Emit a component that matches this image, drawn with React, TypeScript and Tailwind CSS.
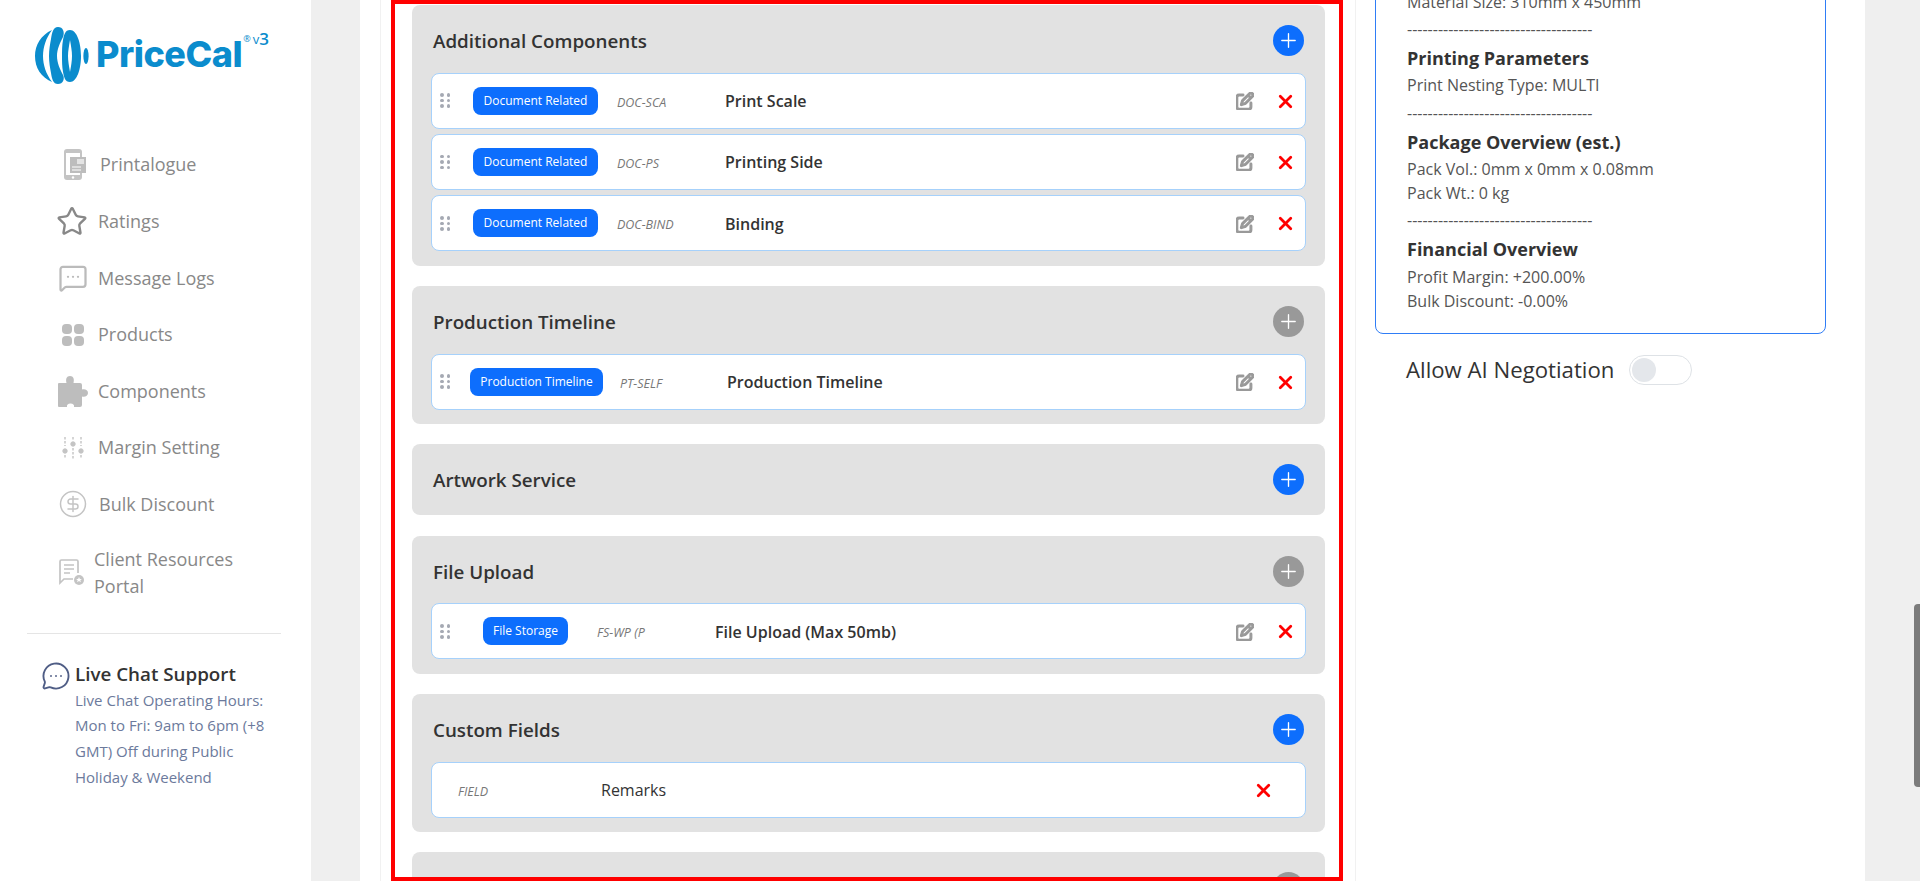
import { CircleDollarSign, MessageCircleMore, MessageSquareMore, Plus, Star, X } from 'lucide-react';
import { FaRegPenToSquare } from 'react-icons/fa6';

const font = "font-['Open_Sans',sans-serif]";

function PrintalogueIcon() {
  return (
    <svg width="24" height="33" viewBox="0 0 24 33" fill="none">
      <rect x="1" y="1" width="18" height="31" rx="3" fill="#c4c4c4" />
      <rect x="3" y="5" width="14" height="22" fill="#fff" />
      <rect x="7" y="9" width="16" height="16" fill="#bdbdbd" />
      <rect x="14" y="11" width="7" height="5" fill="#e4e4e4" />
      <path d="M9 19h9M9 22h9" stroke="#fff" strokeWidth="1.2" />
      <circle cx="10" cy="29.5" r="1.2" fill="#fff" />
    </svg>
  );
}

function ProductsIcon() {
  return (
    <svg width="24" height="24" viewBox="0 0 24 24" fill="#bdbdbd">
      <rect x="1" y="1" width="10" height="10" rx="4" />
      <rect x="13" y="1" width="10" height="10" rx="4" />
      <rect x="1" y="13" width="10" height="10" rx="4" />
      <rect x="13" y="13" width="10" height="10" rx="4" />
    </svg>
  );
}

function PuzzleIcon() {
  return (
    <svg width="30" height="31" viewBox="0 0 30 31" fill="#bdbdbd">
      <path d="M1 7h7.500C7.500 3 8.500 0 12 0s4.500 3 3.500 7H22a2 2 0 0 1 2 2v4.500c3-.7 6 .5 6 3.500s-3 4.200-6 3.500V29a2 2 0 0 1-2 2h-6c.5-2-1-3.500-3.500-3.500S8.500 29 9 31H1a1 1 0 0 1-1-1V8a1 1 0 0 1 1-1z" />
    </svg>
  );
}

function MarginIcon() {
  return (
    <svg width="22" height="24" viewBox="0 0 22 24" fill="#c4c4c4" stroke="#c4c4c4">
      <path d="M3 1v9M3 19v4M11 1v4M11 12v11M19 1v9M19 19v4" strokeWidth="1.4" strokeDasharray="2.5 1.5" />
      <circle cx="3" cy="15" r="2.2" />
      <circle cx="11" cy="8" r="2.2" />
      <circle cx="19" cy="15" r="2.2" />
    </svg>
  );
}

function ClientIcon() {
  return (
    <svg width="27" height="27" viewBox="0 0 27 27" fill="none" stroke="#c4c4c4" strokeWidth="1.7">
      <path d="M15 20H6l-4 4V2.500A1.500 1.500 0 0 1 3.500 1h15A1.500 1.500 0 0 1 20 2.500V14" />
      <path d="M6 6h10M6 10h10M6 14h6" />
      <circle cx="21" cy="21" r="5" fill="#c4c4c4" stroke="none" />
      <path d="m21 18 .9 2h2l-1.600 1.300.6 2-1.900-1.200-1.900 1.200.6-2L18.100 20h2z" fill="#fff" stroke="none" />
    </svg>
  );
}

function LogoMark() {
  return (
    <svg width="54" height="58" viewBox="0 0 54 58" fill="#0b8ccd">
      <path d="M17 3C6 8 0 18 0 29c0 12 6 21 17 26-6-8-9-17-9-26 0-9 3-18 9-26z" />
      <path d="M23 0c-5 0-6 6-7 12-1 5-2 11-2 17s1 12 2 17c1 6 2 11 7 11 5 0 7-5 5-9-3-6-6-12-6-19s3-13 6-19c2-5 0-10-5-10z" />
      <path d="M35 3c-5 0-6 5-7 10-1 5-1 11-1 16s0 11 1 16c1 5 2 10 7 10 7 0 11-13 11-26S42 3 35 3zm0 10c1 6 2 11 2 16s-1 10-2 16c-1-6-2-11-2-16s1-10 2-16z" />
      <ellipse cx="51" cy="29" rx="2.600" ry="8" />
    </svg>
  );
}

const navItems = [
  { label: 'Printalogue', icon: <PrintalogueIcon />, rowClass: 'h-[58.500px]', iconClass: 'w-[29px] pl-[5px]', textClass: 'ml-[13px]' },
  { label: 'Ratings', icon: <Star size={33} strokeWidth={1.8} className="-ml-[2px] text-[#888888]" />, rowClass: 'h-[56.500px]', iconClass: 'w-[30px]', textClass: 'ml-[10px]' },
  { label: 'Message Logs', icon: <MessageSquareMore size={30} strokeWidth={1.8} className="text-[#bbbbbb]" />, rowClass: 'h-[56.500px]', iconClass: 'w-[30px]', textClass: 'ml-[10px]' },
  { label: 'Products', icon: <ProductsIcon />, rowClass: 'h-[56.500px]', iconClass: 'w-[30px] pl-[3px]', textClass: 'ml-[10px]' },
  { label: 'Components', icon: <PuzzleIcon />, rowClass: 'h-[56.500px]', iconClass: 'w-[30px]', textClass: 'ml-[10px]' },
  { label: 'Margin Setting', icon: <MarginIcon />, rowClass: 'h-[56.500px]', iconClass: 'w-[30px] pl-[4px]', textClass: 'ml-[10px]' },
  { label: 'Bulk Discount', icon: <CircleDollarSign size={30} strokeWidth={1.2} className="text-[#c4c4c4]" />, rowClass: 'h-[56.500px]', iconClass: 'w-[30px]', textClass: 'ml-[11px]' },
];

type Row = {
  badge?: string;
  code: string;
  name: string;
  badgeClass?: string;
  codeClass: string;
};

const sections: { title: string; active: boolean; rows: Row[] }[] = [
  {
    title: 'Additional Components',
    active: true,
    rows: [
      { badge: 'Document Related', code: 'DOC-SCA', name: 'Print Scale', badgeClass: 'ml-[23px] w-[125px]', codeClass: 'ml-[19px] w-[108px]' },
      { badge: 'Document Related', code: 'DOC-PS', name: 'Printing Side', badgeClass: 'ml-[23px] w-[125px]', codeClass: 'ml-[19px] w-[108px]' },
      { badge: 'Document Related', code: 'DOC-BIND', name: 'Binding', badgeClass: 'ml-[23px] w-[125px]', codeClass: 'ml-[19px] w-[108px]' },
    ],
  },
  {
    title: 'Production Timeline',
    active: false,
    rows: [
      { badge: 'Production Timeline', code: 'PT-SELF', name: 'Production Timeline', badgeClass: 'ml-[20px] w-[133px]', codeClass: 'ml-[17px] w-[107px]' },
    ],
  },
  { title: 'Artwork Service', active: true, rows: [] },
  {
    title: 'File Upload',
    active: false,
    rows: [
      { badge: 'File Storage', code: 'FS-WP (P', name: 'File Upload (Max 50mb)', badgeClass: 'ml-[33px] w-[85px]', codeClass: 'ml-[29px] w-[118px]' },
    ],
  },
  {
    title: 'Custom Fields',
    active: true,
    rows: [{ code: 'FIELD', name: 'Remarks', codeClass: 'ml-[26px] w-[143px]' }],
  },
  { title: '', active: false, rows: [] },
];

function ComponentRow({ row }: { row: Row }) {
  return (
    <div className="mb-[5.33px] flex h-[56px] items-center rounded-lg border border-[#a6d1fb] bg-white">
      {row.badge && (
        <>
          <div className="ml-[8px] grid w-[10px] grid-cols-2 gap-x-[3px] gap-y-[2px]">
            {[0, 1, 2, 3, 4, 5].map((d) => (
              <span key={d} className="h-[3.500px] w-[3.500px] rounded-full bg-[#a5a9b3]" />
            ))}
          </div>
          <span className={`${row.badgeClass} flex h-[28px] items-center justify-center rounded-lg bg-[#0d6efd] text-[12px] text-white`}>
            {row.badge}
          </span>
        </>
      )}
      <span className={`${row.codeClass} mt-[5px] text-[12.500px] text-[#777777] italic`}>{row.code}</span>
      <span className={`mt-[1px] flex-1 text-[16px] text-[#333333] ${row.badge ? 'font-semibold' : 'font-normal'}`}>{row.name}</span>
      {row.badge ? (
        <>
          <FaRegPenToSquare size={18} stroke="currentColor" strokeWidth={36} className="mt-[1px] mr-[21px] text-[#999999]" />
          <X size={21} strokeWidth={3.2} className="mt-[1px] mr-[9px] text-[#ff0000]" />
        </>
      ) : (
        <X size={21} strokeWidth={3.2} className="mt-[1px] mr-[31px] text-[#ff0000]" />
      )}
    </div>
  );
}

function Section({ title, active, rows }: { title: string; active: boolean; rows: Row[] }) {
  return (
    <section className={`rounded-lg bg-[#e2e2e2] px-[19px] pt-5 ${rows.length ? 'pb-[9px]' : 'pb-5'}`}>
      <div className="flex h-[31px] items-center justify-between">
        <h3 className="mt-[1px] pl-[2px] text-[18.800px] font-semibold text-[#333333]">{title}</h3>
        <span className={`mr-[2px] flex h-[31px] w-[31px] items-center justify-center rounded-full ${active ? 'bg-[#0d6efd]' : 'bg-[#999999]'}`}>
          <Plus size={23} strokeWidth={1.4} className="text-white" />
        </span>
      </div>
      {rows.length > 0 && (
        <div className="mt-[16.670px]">
          {rows.map((row) => (
            <ComponentRow key={row.code} row={row} />
          ))}
        </div>
      )}
    </section>
  );
}

const dashes = '------------------------------------';

export default function App() {
  return (
    <div className={`${font} relative flex h-screen overflow-hidden bg-[#efefef]`}>
      <aside className="flex h-full w-[311px] flex-none flex-col bg-white">
        <div className="relative ml-[35px] flex h-[135px] items-start pt-[27px]">
          <LogoMark />
          <span className="mt-[5px] ml-[7px] font-['Inter',sans-serif] text-[36px] leading-[44px] font-extrabold tracking-[-0.5px] text-[#0b8ccd]">PriceCal</span>
          <span className="mt-[5px] ml-[1px] text-[9px] text-[#0b8ccd]">®</span>
          <span className="mt-[3px] ml-[2px] text-[13px] text-[#0b8ccd]">v</span>
          <span className="-mt-[1px] text-[17px] font-semibold text-[#0b8ccd]">3</span>
        </div>
        <nav className="pl-[58px]">
          {navItems.map((item) => (
            <div key={item.label} className={`flex ${item.rowClass} items-center`}>
              <span className={`flex ${item.iconClass} flex-none items-center`}>{item.icon}</span>
              <span className={`${item.textClass} text-[18px] text-[#888888]`}>{item.label}</span>
            </div>
          ))}
          <div className="flex h-[80px] items-center">
            <span className="flex w-[27px] flex-none">
              <ClientIcon />
            </span>
            <span className="ml-[9px] w-[170px] text-[18px] leading-[27px] text-[#888888]">Client Resources Portal</span>
          </div>
        </nav>
        <div className="mt-[20px] mr-[30px] ml-[27px] border-t border-[#e5e5e5]" />
        <div className="mt-[28px] flex pl-[42px]">
          <MessageCircleMore size={30} strokeWidth={1.5} className="mt-[-1px] -ml-[1px] flex-none text-[#4f5d85]" />
          <div className="ml-[4px]">
            <p className="text-[18.800px] leading-[24px] font-semibold text-[#333333]">Live Chat Support</p>
            <p className="mt-[2px] w-[200px] text-[15px] leading-[25.700px] text-[#6c7a9c]">
              Live Chat Operating Hours: Mon to Fri: 9am to 6pm (+8 GMT) Off during Public Holiday &amp; Weekend
            </p>
          </div>
        </div>
      </aside>

      <main className="ml-[49px] flex h-full w-[1505px] flex-none bg-white">
        <div className="ml-[20px] flex w-[976px] flex-none flex-col gap-[20.330px] border-x border-[#f1f1f1] pt-[5px] pr-[30px] pl-[31px]">
          {sections.map((section) => (
            <Section key={section.title || 'more'} {...section} />
          ))}
        </div>
        <div className="ml-[19px] w-[451px] flex-none">
          <div className="-mt-[40px] h-[374px] rounded-lg border border-[#2f7df6] pt-[29px] pl-[31px] text-[16px] leading-[24px] text-[#555555]">
            <p>Material Size: 310mm x 450mm</p>
            <p className="mt-[3px]">{dashes}</p>
            <p className="mt-[5px] text-[18px] font-bold text-[#333333]">Printing Parameters</p>
            <p className="mt-[3px]">Print Nesting Type: MULTI</p>
            <p className="mt-[4px]">{dashes}</p>
            <p className="mt-[5px] text-[18px] font-bold text-[#333333]">Package Overview (est.)</p>
            <p className="mt-[3px]">Pack Vol.: 0mm x 0mm x 0.08mm</p>
            <p>Pack Wt.: 0 kg</p>
            <p className="mt-[3px]">{dashes}</p>
            <p className="mt-[5px] text-[18px] font-bold text-[#333333]">Financial Overview</p>
            <p className="mt-[4px]">Profit Margin: +200.00%</p>
            <p>Bulk Discount: -0.00%</p>
          </div>
          <div className="mt-[19px] flex items-center pl-[31px]">
            <span className="text-[22.200px] font-medium text-[#333333]">Allow AI Negotiation</span>
            <span className="ml-[15px] flex h-[30px] w-[63px] items-center rounded-full border border-[#dee2e6] pl-[2px]">
              <span className="h-[24px] w-[24px] rounded-full bg-[#e4e7eb]" />
            </span>
          </div>
        </div>
      </main>

      {/* red selection outline and the page scrollbar sit on top of the page */}
      <div className="absolute top-0 left-[391px] h-[881px] w-[952px] border-4 border-[#ff0000]" />
      <div className="absolute top-[604px] right-0 h-[183px] w-[6px] rounded-l-sm bg-[#7b7b7b]" />
    </div>
  );
}
